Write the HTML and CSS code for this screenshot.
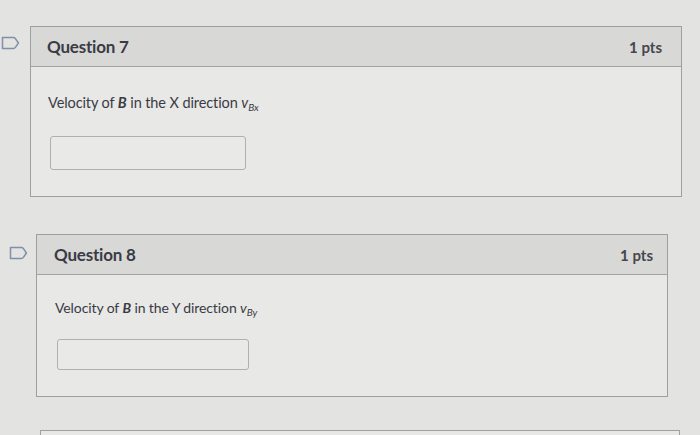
FILE: index.html
```html
<!DOCTYPE html>
<html>
<head>
<meta charset="utf-8">
<link rel="stylesheet" href="styles.css">
</head>
<body>
<div class="page">
  <div class="row row-q7">
    <div class="flag"><svg width="19" height="14" viewBox="0 0 19 14"><path d="M1.5 1.5 H12.5 Q13.6 1.5 14.4 2.6 L17.4 7 L14.4 11.4 Q13.6 12.5 12.5 12.5 H1.5 Z" fill="none" stroke="#8090a8" stroke-width="1.5" stroke-linejoin="round"/></svg></div>
    <div class="question">
      <div class="q-header"><span class="q-title">Question 7</span><span class="q-pts">1 pts</span></div>
      <div class="q-body">
        <p class="q-text">Velocity of <b><i>B</i></b> in the X direction <span class="var"><i>v</i><sub><i>Bx</i></sub></span></p>
        <div class="answer"></div>
      </div>
    </div>
  </div>
  <div class="row row-q8">
    <div class="flag"><svg width="19" height="14" viewBox="0 0 19 14"><path d="M1.5 1.5 H12.5 Q13.6 1.5 14.4 2.6 L17.4 7 L14.4 11.4 Q13.6 12.5 12.5 12.5 H1.5 Z" fill="none" stroke="#8090a8" stroke-width="1.5" stroke-linejoin="round"/></svg></div>
    <div class="question">
      <div class="q-header"><span class="q-title">Question 8</span><span class="q-pts">1 pts</span></div>
      <div class="q-body">
        <p class="q-text">Velocity of <b><i>B</i></b> in the Y direction <span class="var"><i>v</i><sub><i>By</i></sub></span></p>
        <div class="answer"></div>
      </div>
    </div>
  </div>
  <div class="row row-next">
    <div class="question next"></div>
  </div>
</div>
</body>
</html>
```
FILE: styles.css
```css
html, body {
  margin: 0;
  padding: 0;
  background: #e3e3e1;
  font-family: Lato, "Open Sans", sans-serif;
  color: #3a3b45;
  width: 700px;
  height: 435px;
  overflow: hidden;
}
.page {
  display: flex;
  flex-direction: column;
  padding-top: 26px;
}
.row {
  display: flex;
  position: relative;
}
.flag {
  position: absolute;
  top: 10px;
  left: 1px;
  line-height: 0;
}
.row-q8 .flag { left: 9px; top: 12px; }
.question {
  border: 1px solid #9f9f9d;
  background: #e8e8e6;
  box-sizing: border-box;
}
.row-q7 .question { margin-left: 30px; width: 652px; }
.row-q8 { margin-top: 37px; }
.row-q8 .question { margin-left: 36px; width: 632px; }
.row-next { margin-top: 33px; }
.row-next .question { margin-left: 40px; width: 640px; height: 20px; }
.q-header {
  display: flex;
  justify-content: space-between;
  align-items: center;
  height: 40px;
  background: #d8d8d6;
  border-bottom: 1px solid #a3a3a1;
  box-sizing: border-box;
  padding: 0 19px 0 16px;
}
.row-q8 .q-header { padding: 0 14px 0 17px; }
.q-title {
  font-weight: 700;
  font-size: 17px;
  letter-spacing: -0.2px;
}
.q-pts {
  font-weight: 700;
  font-size: 15px;
  color: #46464e;
}
.q-body {
  height: 129px;
  box-sizing: border-box;
  padding: 27px 17px 0;
}
.row-q8 .q-body { height: 121px; padding: 24px 18px 0; }
.q-text {
  margin: 0;
  font-size: 14.5px;
  line-height: 18px;
  letter-spacing: -0.1px;
}
.row-q8 .q-text { font-size: 14px; }
.q-text b { font-weight: 700; }
.var sub { font-size: 10px; vertical-align: -3px; }
.answer {
  margin-top: 20px;
  margin-left: 2px;
  width: 196px;
  height: 34px;
  border: 1px solid #b0b0ae;
  border-radius: 3px;
  background: #e9e9e7;
  box-sizing: border-box;
}
.row-q8 .answer { margin-top: 18px; width: 192px; height: 31px; }
```
